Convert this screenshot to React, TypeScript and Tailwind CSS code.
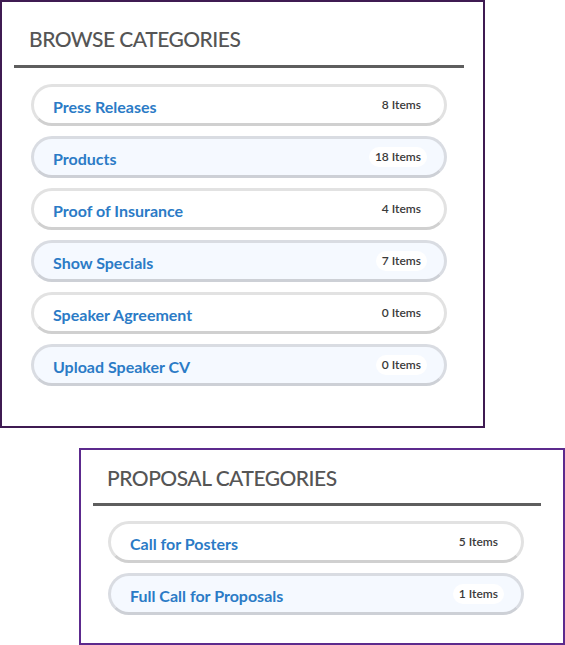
import React from "react";

type Item = { name: string; count: number };

const browse: Item[] = [
  { name: "Press Releases", count: 8 },
  { name: "Products", count: 18 },
  { name: "Proof of Insurance", count: 4 },
  { name: "Show Specials", count: 7 },
  { name: "Speaker Agreement", count: 0 },
  { name: "Upload Speaker CV", count: 0 },
];

const proposal: Item[] = [
  { name: "Call for Posters", count: 5 },
  { name: "Full Call for Proposals", count: 1 },
];

function Row({ item, alt }: { item: Item; alt: boolean }) {
  return (
    <div
      className={
        "flex items-center justify-between h-[42px] rounded-full border-[3px] pl-[19px] pr-[17px] " +
        (alt
          ? "bg-[#f5f9ff] border-[#d9dce2] border-b-[#cdd0d6]"
          : "bg-white border-[#e2e2e2] border-b-[#d0d0d0]")
      }
    >
      <span className="text-[16px] font-bold text-[#2b7bc6] leading-none pt-[3px]">{item.name}</span>
      <span
        className={
          "text-[12px] font-semibold text-[#3a3a3a] leading-none px-[6px] py-[4px] rounded-full " +
          (alt ? "bg-white" : "")
        }
      >
        {item.count} Items
      </span>
    </div>
  );
}

export default function App() {
  return (
    <div className="w-[565px] h-[645px] bg-white" style={{ fontFamily: "Lato, 'Open Sans', sans-serif" }}>
      <div className="w-[485px] h-[428px] border-2 border-[#3f1b52] pt-[23px]">
        <h2 className="pl-[27px] text-[21px] font-medium text-[#555555] leading-[28px] tracking-[-0.5px]">
          BROWSE CATEGORIES
        </h2>
        <div className="ml-[12px] w-[450px] h-[3px] bg-[#5e5e5e] mt-[12px]" />
        <div className="flex flex-col gap-[10px] ml-[29px] w-[416px] mt-[16px]">
          {browse.map((it, i) => (
            <Row key={it.name} item={it} alt={i % 2 === 1} />
          ))}
        </div>
      </div>
      <div className="ml-[79px] mt-[20px] w-[486px] h-[197px] border-2 border-[#5c2a8d] pt-[14px]">
        <h2 className="pl-[26px] text-[21px] font-medium text-[#555555] leading-[28px] tracking-[-0.5px]">
          PROPOSAL CATEGORIES
        </h2>
        <div className="ml-[12px] w-[448px] h-[3px] bg-[#5e5e5e] mt-[11px]" />
        <div className="flex flex-col gap-[10px] ml-[27px] w-[416px] mt-[15px]">
          {proposal.map((it, i) => (
            <Row key={it.name} item={it} alt={i % 2 === 1} />
          ))}
        </div>
      </div>
    </div>
  );
}
